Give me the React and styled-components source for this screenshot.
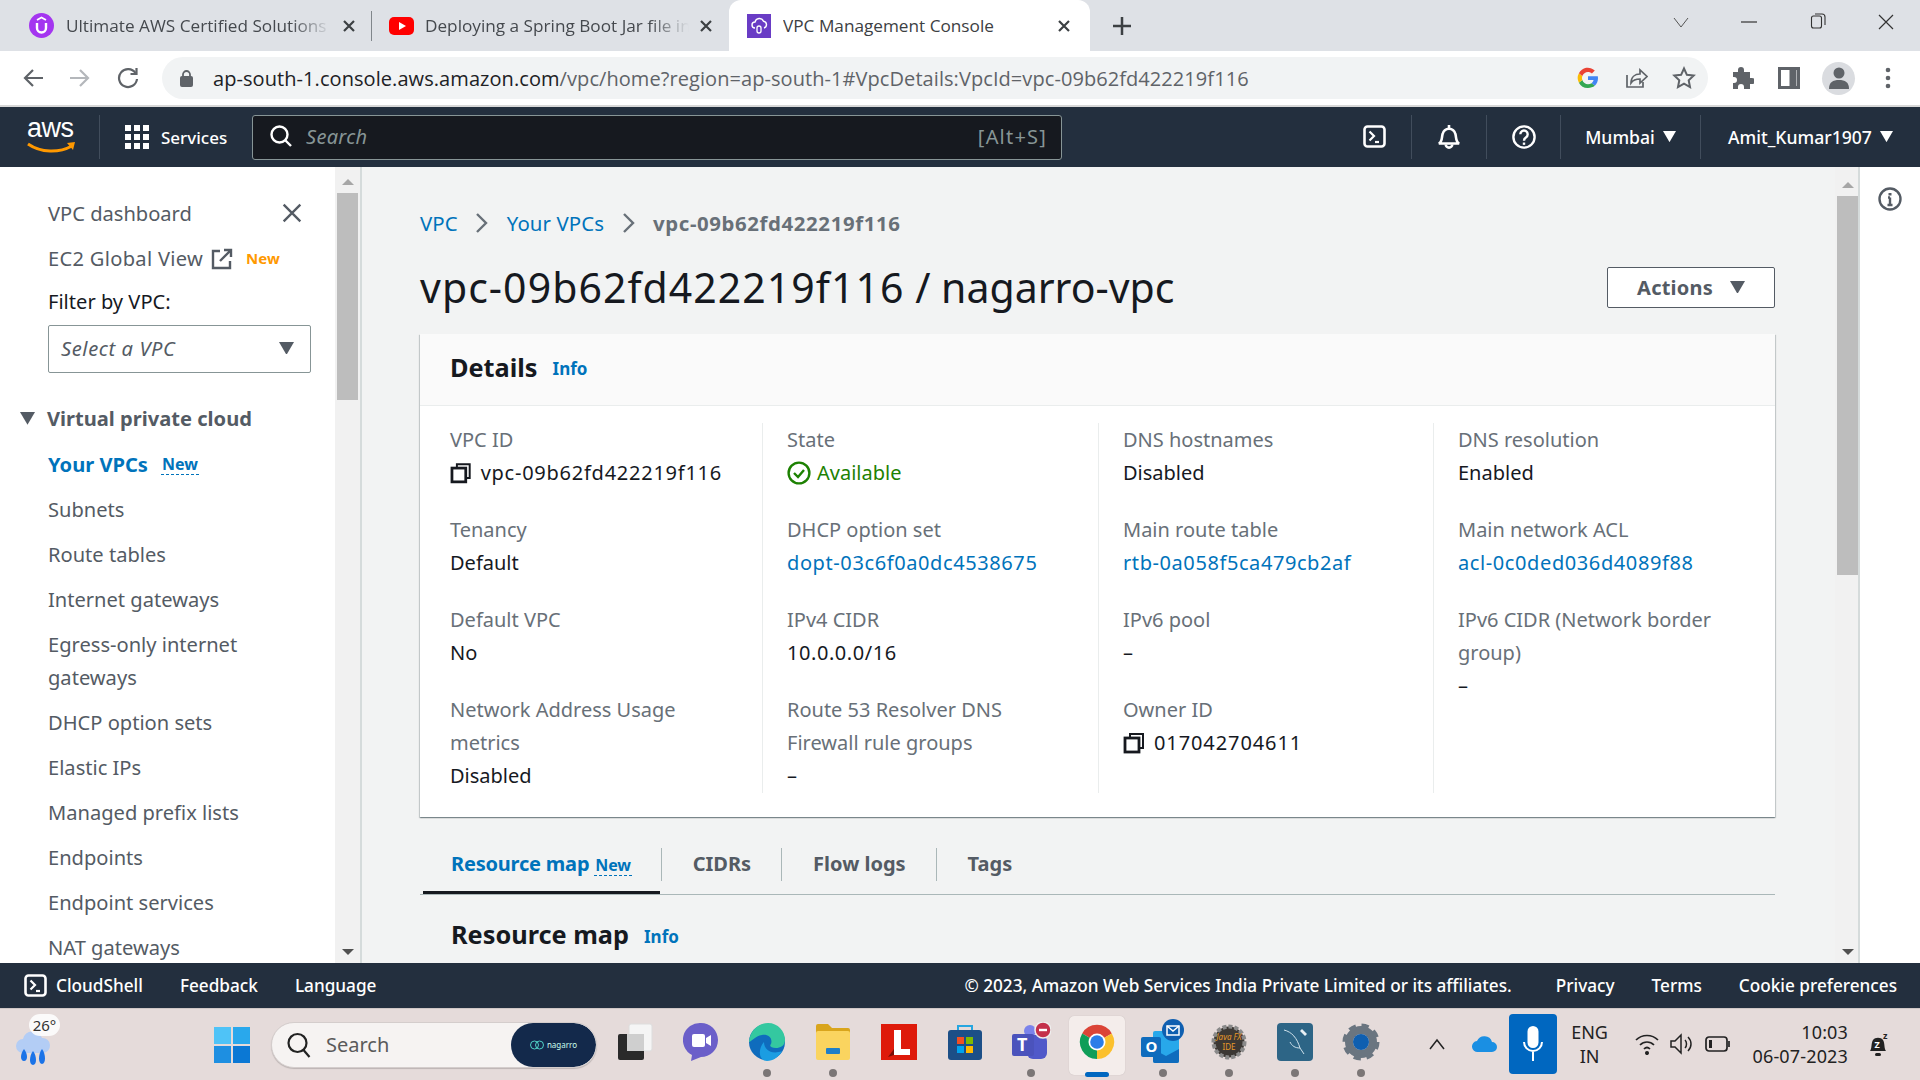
import React from 'react';
import styled, { createGlobalStyle } from 'styled-components';

const GlobalStyle = createGlobalStyle`
  html, body { margin: 0; padding: 0; background: #fff; }
  body { font-family: 'Noto Sans', Arial, sans-serif; overflow: hidden; }
  * { box-sizing: border-box; }
`;

const Page = styled.div`
  width: 1920px;
  height: 1080px;
  display: flex;
  flex-direction: column;
  overflow: hidden;
`;

/* browser chrome */
const TabStrip = styled.div`
  height: 51px;
  flex: none;
  display: flex;
  background: #dee1e6;
  color: #3c4043;
`;

const Tab = styled.div`
  width: ${p => p.$width}px;
  height: 51px;
  flex: none;
  display: flex;
  align-items: center;
  gap: ${p => p.$gap || 12}px;
  margin-left: ${p => (p.$active ? 4 : 0)}px;
  padding: 0 ${p => p.$right}px 0 ${p => p.$left}px;
  background: ${p => (p.$active ? '#fff' : 'transparent')};
  border-radius: ${p => (p.$active ? '12px 12px 0 0' : '0')};
`;

const TabDivider = styled.div`
  width: 1px;
  height: 30px;
  flex: none;
  align-self: center;
  background: #80868b;
`;

const TabTitle = styled.span`
  flex: 1;
  min-width: 0;
  overflow: hidden;
  white-space: nowrap;
  font-family: 'Open Sans', sans-serif;
  font-size: 17.2px;
  color: ${p => (p.$active ? '#3c4043' : '#45494e')};
  ${p => !p.$active && `
    -webkit-mask-image: linear-gradient(90deg, #000 85%, transparent 100%);
    mask-image: linear-gradient(90deg, #000 85%, transparent 100%);
  `}
`;

const NewTab = styled.div`
  width: 60px;
  margin-left: 2px;
  display: flex;
  align-items: center;
  justify-content: center;
`;

const WindowControls = styled.div`
  margin-left: auto;
  display: flex;
  align-items: flex-start;
  padding: 13px 26px 0 0;
  gap: 52.5px;
`;

const AddressRow = styled.div`
  height: 54px;
  flex: none;
  display: flex;
  align-items: center;
  background: #fff;
  padding: 0 0 0 20px;
`;

const NavButton = styled.div`
  width: 26px;
  margin-right: ${p => p.$gap}px;
  display: flex;
  align-items: center;
  justify-content: center;
`;

const Omnibox = styled.div`
  width: 1546px;
  height: 42px;
  margin-left: 21px;
  border-radius: 21px;
  background: #f1f3f4;
  display: flex;
  align-items: center;
  padding: 0 12px 0 18px;
`;

const Url = styled.div`
  margin-left: 20px;
  flex: 1;
  font-family: 'Open Sans', sans-serif;
  font-size: 20px;
  letter-spacing: 0.07px;
  white-space: nowrap;
  color: #5f6368;
  b { font-weight: 400; color: #202124; }
`;

const OmniIcons = styled.div`
  display: flex;
  align-items: center;
  gap: 24px;
`;

const ToolIcons = styled.div`
  display: flex;
  align-items: center;
  margin-left: 22px;
  gap: 24px;
`;

const Avatar = styled.div`
  width: 33px;
  height: 33px;
  border-radius: 50%;
  background: #dadce0;
  display: flex;
  align-items: center;
  justify-content: center;
  margin: 0 6px 0 -2px;
`;

const ChromeRule = styled.div`
  height: 2px;
  flex: none;
  background: #d8d8d8;
`;

/* aws top nav */
const TopNav = styled.div`
  height: 60px;
  flex: none;
  background: #232f3e;
  color: #fff;
  display: flex;
  align-items: center;
  font-size: 17px;
  font-weight: 500;
`;

const LogoBox = styled.div`
  width: 100px;
  height: 44px;
  padding-left: 27px;
  border-right: 1px solid #414d5c;
  display: flex;
  flex-direction: column;
`;

const LogoText = styled.span`
  font-family: 'Liberation Sans', sans-serif;
  font-size: 27px;
  line-height: 26px;
  height: 26px;
  letter-spacing: -0.5px;
`;

const ServicesBtn = styled.div`
  width: 152px;
  display: flex;
  align-items: center;
  gap: 12px;
  padding-left: 25px;
`;

const SearchBox = styled.div`
  width: 810px;
  height: 45px;
  background: #16191f;
  border: 1px solid #879596;
  border-radius: 3px;
  display: flex;
  align-items: center;
  padding: 0 14px 2px 17px;
  gap: 14px;
`;

const SearchHint = styled.span`
  flex: 1;
  color: #879596;
  font-style: italic;
  font-size: 20px;
  letter-spacing: 0.3px;
  font-weight: 400;
`;

const Shortcut = styled.span`
  color: #879596;
  font-size: 20px;
  letter-spacing: 1.2px;
  font-weight: 400;
`;

const NavRight = styled.div`
  margin-left: auto;
  display: flex;
  align-items: center;
  height: 44px;
`;

const NavCell = styled.div`
  height: 44px;
  display: flex;
  align-items: center;
  justify-content: center;
  gap: 8px;
  width: ${p => p.$width}px;
  font-size: 17.6px;
  padding-bottom: 1px;
  border-left: ${p => (p.$sep ? '1px solid #414d5c' : 'none')};
`;

/* body */
const Body = styled.div`
  flex: 1;
  min-height: 0;
  display: flex;
  background: #f2f3f3;
`;

const Sidebar = styled.nav`
  width: 335px;
  flex: none;
  background: #fff;
  overflow: hidden;
  color: #545b64;
  font-size: 20.1px;
  padding: 28px 24px 0 48px;
`;

const NavLine = styled.div`
  display: flex;
  align-items: center;
  height: ${p => p.$height || 45}px;
  line-height: 33px;
  color: ${p => (p.$active ? '#0073bb' : '#545b64')};
  font-weight: ${p => (p.$active ? 700 : 400)};
`;

const SideClose = styled.span`
  display: flex;
  margin-left: auto;
  margin-right: 9px;
`;

const GlobalLabel = styled.span`
  letter-spacing: 0.3px;
  margin-right: 8px;
`;

const WrapItem = styled.div`
  line-height: 33px;
  padding: 6px 0;
  width: 220px;
`;

const NewTag = styled.span`
  font-size: ${p => (p.$dashed ? 16 : 15)}px;
  font-weight: 700;
  margin-left: ${p => p.$gap}px;
  color: ${p => p.$color};
  ${p => p.$dashed && `
    border-bottom: 1px dashed ${p.$color};
    line-height: 20px;
    padding: 0 1px;
  `}
`;

const TabNew = styled(NewTag)`
  margin-top: 7px;
`;

const FilterLabel = styled.div`
  color: #16191f;
  height: 31px;
  line-height: 31px;
  margin-bottom: 8px;
`;

const SelectBox = styled.div`
  width: 263px;
  height: 48px;
  border: 1px solid #879596;
  border-radius: 2px;
  display: flex;
  align-items: center;
  justify-content: space-between;
  padding: 0 16px 2px 12px;
  font-style: italic;
  letter-spacing: 0.6px;
  margin-bottom: 22px;
`;

const GroupTitle = styled.div`
  display: flex;
  align-items: center;
  gap: 12px;
  margin-left: -28px;
  height: 47px;
  font-weight: 700;
`;

const Track = styled.div`
  width: ${p => p.$width}px;
  flex: none;
  background: #f1f1f1;
  border-right: 2px solid #d5dbdb;
  display: flex;
  flex-direction: column;
  align-items: center;
  padding: ${p => p.$top}px 0 8px ${p => p.$left || 0}px;
`;

const Thumb = styled.div`
  width: 21px;
  height: ${p => p.$height}px;
  margin-top: 8px;
  background: #bdbdbd;
`;

const Arrow = styled.div`
  width: 0;
  height: 0;
  border-left: 6px solid transparent;
  border-right: 6px solid transparent;
  ${p => (p.$down ? 'border-top: 6px solid #505050;' : 'border-bottom: 6px solid #a6a6a6;')}
  ${p => p.$down && 'margin-top: auto;'}
`;

const Main = styled.main`
  flex: 1;
  min-width: 0;
  overflow: hidden;
  padding: 0 60px 0 58px;
`;

const Breadcrumbs = styled.div`
  display: flex;
  align-items: center;
  height: 84px;
  padding-top: 27px;
  font-size: 20.4px;
  gap: 17.5px;
`;

const Crumb = styled.span`
  color: ${p => (p.$current ? '#687078' : '#0073bb')};
  font-weight: ${p => (p.$current ? 700 : 400)};
  letter-spacing: ${p => (p.$current ? '0.6px' : '0.1px')};
`;

const TitleRow = styled.div`
  display: flex;
  align-items: center;
  justify-content: space-between;
  height: 72px;
  margin-bottom: 11px;
`;

const Title = styled.h1`
  margin: 0;
  font-size: 41px;
  font-weight: 400;
  color: #16191f;
`;

const TitleId = styled.span`
  letter-spacing: 1.05px;
`;

const ActionsBtn = styled.div`
  width: 168px;
  height: 41px;
  background: #fff;
  border: 1px solid #545b64;
  border-radius: 2px;
  display: flex;
  align-items: center;
  justify-content: center;
  gap: 17px;
  color: #545b64;
  font-size: 20px;
  letter-spacing: 0.2px;
  font-weight: 700;
`;

const Card = styled.section`
  background: #fff;
  height: 483px;
  box-shadow: 0 1px 1px 0 rgba(0, 28, 36, 0.3), 1px 1px 1px 0 rgba(0, 28, 36, 0.15), -1px 1px 1px 0 rgba(0, 28, 36, 0.15);
`;

const CardHeader = styled.header`
  height: 72px;
  background: #fafafa;
  border-bottom: 1px solid #eaeded;
  display: flex;
  align-items: center;
  padding: 0 0 6px 30px;
  gap: 15px;
`;

const SectionTitle = styled.h2`
  margin: 0;
  font-size: 25.3px;
  font-weight: 700;
  color: #16191f;
`;

const InfoLink = styled.span`
  font-size: 17px;
  font-weight: 700;
  color: #0073bb;
  margin-top: 4px;
`;

const FieldGrid = styled.div`
  display: grid;
  grid-template-columns: 342px 336px 335px 1fr;
  padding: 17px 0 0;
`;

const FieldCol = styled.div`
  height: 370px;
  padding: 0 40px 0 ${p => (p.$first ? 30 : 24)}px;
  border-left: ${p => (p.$first ? 'none' : '1px solid #eaeded')};
  display: flex;
  flex-direction: column;
  gap: 24px;
`;

const Field = styled.div`
  font-size: 20px;
  line-height: 33px;
`;

const Label = styled.div`
  color: #687078;
`;

const Value = styled.div`
  display: flex;
  align-items: center;
  gap: 6px;
  white-space: nowrap;
  letter-spacing: ${p => p.$track || 0}px;
  color: ${p => p.$color || '#16191f'};
`;

const CopyGlyph = styled.svg`
  margin-right: 3px;
`;

const TabBar = styled.div`
  margin-top: 31px;
  height: 47px;
  display: flex;
  border-bottom: 1px solid #aab7b8;
  align-items: flex-start;
`;

const DetailTab = styled.div`
  height: ${p => (p.$active ? '46px' : '33px')};
  display: flex;
  align-items: center;
  padding: 0 30px 2px 31px;
  font-size: 20px;
  line-height: 31px;
  font-weight: 700;
  color: ${p => (p.$active ? '#0073bb' : '#545b64')};
  ${p => (p.$active
    ? `align-items: flex-start; margin: 0 1px 0 3px; padding: 0 28px 0 28px; border-bottom: 3px solid #16191f; letter-spacing: -0.2px;`
    : `border-left: 1px solid #aab7b8;`)}
`;

const SubHeading = styled.div`
  display: flex;
  align-items: center;
  gap: 15px;
  padding: 22px 0 0 31px;
`;

const SidePanel = styled.aside`
  width: 60px;
  flex: none;
  background: #fff;
  display: flex;
  justify-content: center;
  padding-top: 20px;
`;

/* aws footer */
const Footer = styled.footer`
  height: 45px;
  flex: none;
  background: #232f3e;
  color: #fff;
  display: flex;
  align-items: center;
  padding: 0 23px 0 24px;
  font-size: 17.2px;
  font-weight: 500;
`;

const FooterGroup = styled.div`
  display: flex;
  align-items: center;
  gap: 37px;
  margin-left: ${p => (p.$right ? 'auto' : 0)};
`;

const Copyright = styled.span`
  margin-right: 7px;
`;

const ShellBtn = styled.div`
  display: flex;
  align-items: center;
  gap: 9px;
`;

/* windows taskbar */
const Taskbar = styled.div`
  height: 72px;
  flex: none;
  background: #e5dbda;
  border-top: 1px solid #cfc7c6;
  display: flex;
  align-items: center;
  position: relative;
  padding-left: 15px;
`;

const Weather = styled.div`
  width: 50px;
  height: 50px;
  position: relative;
  margin-top: 4px;
`;

const TempBadge = styled.span`
  position: absolute;
  left: 14px;
  top: -8px;
  width: 31px;
  height: 22px;
  border-radius: 11px;
  background: rgba(255, 255, 255, 0.85);
  color: #333;
  font-size: 15px;
  line-height: 22px;
  text-align: center;
`;

const WinLogo = styled.div`
  margin-left: 149px;
  width: 36px;
  display: flex;
`;

const TaskSearch = styled.div`
  width: 326px;
  height: 46px;
  margin-left: 21px;
  border-radius: 23px;
  background: #f6f3f2;
  border: 1px solid #d4cdcc;
  box-shadow: 0 1px 1px rgba(0, 0, 0, 0.18);
  display: flex;
  align-items: center;
  padding-left: 15px;
  gap: 15px;
  font-size: 20px;
  color: #5a5a5a;
  overflow: hidden;
`;

const SearchLabel = styled.span`
  flex: 1;
`;

const Nagarro = styled.div`
  width: 85px;
  height: 44px;
  border-radius: 22px;
  background: #13294b;
  color: #cfe;
  font-size: 8px;
  display: flex;
  align-items: center;
  justify-content: center;
  gap: 3px;
`;

const TaskItems = styled.div`
  display: flex;
  margin-left: 5px;
`;

const TaskItem = styled.div`
  width: 66px;
  height: 70px;
  position: relative;
  display: flex;
  align-items: center;
  justify-content: center;
  padding-bottom: 5px;
`;

const TaskGlyph = styled.span`
  position: relative;
  display: flex;
`;

const ActiveTile = styled.div`
  position: absolute;
  left: 5px;
  top: 6px;
  width: 56px;
  height: 59px;
  border-radius: 5px;
  background: #f4edeb;
  box-shadow: 0 0 1px rgba(0, 0, 0, 0.2);
`;

const RunDot = styled.span`
  position: absolute;
  left: 50%;
  bottom: 3px;
  transform: translateX(-50%);
  width: ${p => (p.$active ? 24 : 8)}px;
  height: ${p => (p.$active ? 5 : 8)}px;
  border-radius: 4px;
  background: ${p => (p.$active ? '#0067c0' : '#7b7676')};
`;

const Tray = styled.div`
  position: absolute;
  right: 31px;
  top: 0;
  height: 70px;
  display: flex;
  align-items: center;
  color: #222;
`;

const OneDrive = styled.span`
  display: flex;
  margin-left: 26px;
`;

const MicTile = styled.div`
  width: 48px;
  height: 60px;
  border-radius: 4px;
  background: #0067c0;
  display: flex;
  align-items: center;
  justify-content: center;
  margin: 0 7px 0 11px;
`;

const Lang = styled.div`
  width: 52px;
  text-align: center;
  font-size: 18px;
  line-height: 24px;
  margin-right: 19px;
`;

const TrayIcons = styled.div`
  display: flex;
  align-items: center;
  gap: 11px;
  margin-right: 22px;
`;

const Clock = styled.div`
  text-align: right;
  font-size: 18px;
  letter-spacing: 0.15px;
  line-height: 24px;
  margin-right: 19px;
`;

/* icons */
const Caret = ({ size = 14, color = '#545b64' }) => (
  <svg width={size} height={size * 0.86} viewBox="0 0 14 12"><path d="M0 0h14L7 12z" fill={color} /></svg>
);

const Chevron = () => (
  <svg width="14" height="22" viewBox="0 0 14 22" fill="none"><path d="M2 2l9 9-9 9" stroke="#687078" strokeWidth="2.4" /></svg>
);

const CloseX = ({ size = 12, color = '#3c4043', width = 2.2 }) => (
  <svg width={size} height={size} viewBox="0 0 12 12" fill="none"><path d="M1 1l10 10M11 1L1 11" stroke={color} strokeWidth={width} /></svg>
);

const Shell = () => (
  <svg width="23" height="23" viewBox="0 0 23 23" fill="none">
    <rect x="1.5" y="1.5" width="20" height="20" rx="3" stroke="#fff" strokeWidth="2.6" />
    <path d="M6.500 6.500l4.500 4.500-4.500 4.500" stroke="#fff" strokeWidth="2.2" />
    <path d="M12 17h4" stroke="#fff" strokeWidth="2.2" />
  </svg>
);

const Copy = () => (
  <CopyGlyph width="22" height="22" viewBox="0 0 22 22" fill="none" stroke="#16191f" strokeWidth="2.8">
    <rect x="2" y="6" width="14" height="14" />
    <path d="M7 5V2h13v14h-3" strokeWidth="2" />
  </CopyGlyph>
);

const Check = () => (
  <svg width="24" height="24" viewBox="0 0 24 24" fill="none" stroke="#1d8102" strokeWidth="2.4">
    <circle cx="12" cy="12" r="10.4" />
    <path d="M7 12l4 4 6-7" />
  </svg>
);

const Udemy = () => (
  <svg width="25" height="25" viewBox="0 0 25 25">
    <circle cx="12.5" cy="12.5" r="12.5" fill="#a435f0" />
    <path d="M8 10v5a4.5 4.5 0 0 0 9 0v-5" fill="none" stroke="#fff" strokeWidth="2.4" />
    <path d="M8 7l4.5-2.5L17 7" fill="none" stroke="#fff" strokeWidth="1.8" />
  </svg>
);

const YouTube = () => (
  <svg width="25" height="18" viewBox="0 0 25 18">
    <rect width="25" height="18" rx="5" fill="#f00" />
    <path d="M10 5l7 4-7 4z" fill="#fff" />
  </svg>
);

const VpcFav = () => (
  <svg width="24" height="24" viewBox="0 0 24 24">
    <rect width="24" height="24" fill="#693cc5" />
    <path d="M8 14a3 3 0 0 1 0-6 4.5 4.5 0 0 1 8.500-.8A3.500 3.500 0 0 1 17 14" fill="none" stroke="#fff" strokeWidth="1.4" />
    <rect x="10" y="12" width="4" height="7" rx="2" fill="none" stroke="#fff" strokeWidth="1.3" />
  </svg>
);

const GoogleG = () => (
  <svg width="24" height="24" viewBox="0 0 24 24">
    <path d="M22 12.200c0-.7-.1-1.400-.2-2H12v3.900h5.600a4.800 4.800 0 0 1-2.100 3.100l3.300 2.600c2-1.800 3.200-4.500 3.200-7.600z" fill="#4285f4" />
    <path d="M12 22c2.700 0 5-.9 6.800-2.200l-3.300-2.600c-.9.600-2.100 1-3.500 1-2.600 0-4.900-1.800-5.700-4.200l-3.400 2.700A10 10 0 0 0 12 22z" fill="#34a853" />
    <path d="M6.300 14a6 6 0 0 1 0-4L2.900 7.300a10 10 0 0 0 0 9.400z" fill="#fbbc05" />
    <path d="M12 5.900c1.500 0 2.800.5 3.900 1.500l2.900-2.900A10 10 0 0 0 2.900 7.300L6.300 10C7.100 7.700 9.400 5.900 12 5.900z" fill="#ea4335" />
  </svg>
);

const Grid9 = () => (
  <svg width="24" height="24" viewBox="0 0 24 24" fill="#fff">
    {[0, 9, 18].flatMap(y => [0, 9, 18].map(x => <rect key={`${x}-${y}`} x={x} y={y} width="6" height="6" />))}
  </svg>
);

const ChromeLogo = () => (
  <svg width="36" height="36" viewBox="0 0 36 36">
    <path d="M18 18L3.200 9.500A17 17 0 0 1 32.800 9.500z" fill="#db4437" />
    <path d="M18 18L32.800 9.500A17 17 0 0 1 18 35z" fill="#fbc02d" />
    <path d="M18 18L18 35A17 17 0 0 1 3.200 9.500z" fill="#0f9d58" />
    <circle cx="18" cy="18" r="8.500" fill="#fff" />
    <circle cx="18" cy="18" r="6.800" fill="#2b7de9" />
  </svg>
);

const taskIcons = [
  { key: 'view', dot: false, icon: (
    <svg width="36" height="38" viewBox="0 0 36 38">
      <rect x="12" y="1" width="23" height="27" rx="2" fill="#f5f5f5" stroke="#ddd" />
      <rect x="1" y="11" width="26" height="26" rx="2" fill="#2a2a2a" />
      <rect x="10" y="11" width="17" height="17" fill="#cfcfcf" />
    </svg>
  ) },
  { key: 'chat', dot: false, icon: (
    <svg width="36" height="40" viewBox="0 0 36 40">
      <path d="M18 1c9 0 17 7 17 17s-8 17-17 17l-10 4 1-6A17 17 0 0 1 18 1z" fill="#6b5fc9" />
      <rect x="9" y="12" width="13" height="13" rx="2" fill="#fff" />
      <path d="M23 16l5-3v11l-5-3z" fill="#fff" />
    </svg>
  ) },
  { key: 'edge', dot: true, icon: (
    <svg width="38" height="40" viewBox="0 0 38 40">
      <circle cx="19" cy="20" r="18" fill="#0f6cbd" />
      <path d="M1 20C2 7 12 1 20 1c10 0 17 8 17 17 0 6-5 8-9 8-5 0-7-2-5-4 2-6-3-10-9-9-7 1-11 7-13 7z" fill="#34c8a0" />
      <path d="M16 20c0 8 8 13 18 9-3 6-9 10-15 10-9 0-9-13-3-19z" fill="#1b9de2" />
    </svg>
  ) },
  { key: 'files', dot: true, icon: (
    <svg width="36" height="38" viewBox="0 0 36 38">
      <path d="M1 3a2 2 0 0 1 2-2h10l4 4h16a2 2 0 0 1 2 2v4H1z" fill="#d9a51c" />
      <rect x="1" y="8" width="34" height="29" rx="2" fill="#fad45f" />
      <rect x="11" y="25" width="14" height="6" rx="1" fill="#1f7fc8" />
    </svg>
  ) },
  { key: 'l', dot: false, icon: (
    <svg width="36" height="36" viewBox="0 0 36 36">
      <rect width="36" height="36" fill="#de1a0a" />
      <path d="M13 6h7v19h9v6H13z" fill="#fff" />
      <path d="M7 33l6-8v6z" fill="#7a0c05" />
    </svg>
  ) },
  { key: 'store', dot: false, icon: (
    <svg width="36" height="38" viewBox="0 0 36 38">
      <path d="M11 8V3h14v5" fill="none" stroke="#26a6e0" strokeWidth="2" />
      <rect x="1" y="7" width="34" height="30" rx="3" fill="#1c4f87" />
      <rect x="10" y="14" width="7" height="7" fill="#f25022" />
      <rect x="19" y="14" width="7" height="7" fill="#7fba00" />
      <rect x="10" y="23" width="7" height="7" fill="#00a4ef" />
      <rect x="19" y="23" width="7" height="7" fill="#ffb900" />
    </svg>
  ) },
  { key: 'teams', dot: true, icon: (
    <svg width="40" height="40" viewBox="0 0 40 40">
      <circle cx="19" cy="9" r="6" fill="#7b83eb" />
      <rect x="16" y="13" width="20" height="24" rx="6" fill="#5059c9" />
      <rect x="1" y="12" width="22" height="22" rx="2" fill="#4b53bc" />
      <text x="6" y="29" fontSize="18" fontWeight="700" fill="#fff" fontFamily="Noto Sans">T</text>
      <circle cx="32" cy="8" r="8" fill="#c4314b" stroke="#eee" strokeWidth="1.500" />
      <rect x="28" y="6.800" width="8" height="2.400" fill="#fff" />
    </svg>
  ) },
  { key: 'chrome', dot: true, active: true, icon: <ChromeLogo /> },
  { key: 'outlook', dot: true, icon: (
    <svg width="46" height="46" viewBox="0 0 46 46">
      <rect x="13" y="12" width="26" height="32" rx="2" fill="#28a8ea" />
      <path d="M13 30l13 7 13-7v12a2 2 0 0 1-2 2H15a2 2 0 0 1-2-2z" fill="#0f6cbd" />
      <rect x="1" y="18" width="20" height="20" rx="2" fill="#0f6cbd" />
      <text x="5.500" y="33" fontSize="15" fontWeight="700" fill="#fff" fontFamily="Noto Sans">O</text>
      <circle cx="33" cy="11" r="11" fill="#0f5fb0" />
      <rect x="27" y="7" width="12" height="9" fill="none" stroke="#fff" strokeWidth="1.500" />
      <path d="M27 7l6 5 6-5" fill="none" stroke="#fff" strokeWidth="1.500" />
    </svg>
  ) },
  { key: 'java', dot: true, icon: (
    <svg width="36" height="38" viewBox="0 0 36 38">
      <circle cx="18" cy="19" r="15.500" fill="#3c3834" stroke="#8a8a8a" strokeWidth="4" strokeDasharray="4 2" />
      <text x="18" y="17" textAnchor="middle" fontSize="8" fontStyle="italic" fill="#e89a2a" fontFamily="Noto Sans">Java FX</text>
      <text x="18" y="27" textAnchor="middle" fontSize="8" fill="#e89a2a" fontFamily="Noto Sans">IDE</text>
    </svg>
  ) },
  { key: 'mysql', dot: true, icon: (
    <svg width="36" height="38" viewBox="0 0 36 38">
      <rect width="36" height="38" rx="4" fill="#2d6586" />
      <path d="M7 7c8 2 13 8 16 18l4 6M23 25c-5 0-8-2-10-6" fill="none" stroke="#cfe2ec" strokeWidth="1" />
      <path d="M25 6l5 5-2 2-5-5z" fill="#e8f0f4" />
    </svg>
  ) },
  { key: 'settings', dot: true, icon: (
    <svg width="38" height="38" viewBox="0 0 38 38">
      <circle cx="19" cy="19" r="12" fill="none" stroke="#6a7580" strokeWidth="8" />
      <circle cx="19" cy="19" r="16" fill="none" stroke="#6a7580" strokeWidth="5" strokeDasharray="7 5.570" />
      <circle cx="19" cy="19" r="8" fill="#0f5fb0" />
    </svg>
  ) },
];

const columns = [
  [
    { label: 'VPC ID', value: 'vpc-09b62fd422219f116', copy: true, track: 0.75 },
    { label: 'Tenancy', value: 'Default' },
    { label: 'Default VPC', value: 'No' },
    { label: 'Network Address Usage metrics', value: 'Disabled' },
  ],
  [
    { label: 'State', value: 'Available', status: true },
    { label: 'DHCP option set', value: 'dopt-03c6f0a0dc4538675', link: true, track: 0.6 },
    { label: 'IPv4 CIDR', value: '10.0.0.0/16', track: 0.55 },
    { label: 'Route 53 Resolver DNS Firewall rule groups', value: '–' },
  ],
  [
    { label: 'DNS hostnames', value: 'Disabled' },
    { label: 'Main route table', value: 'rtb-0a058f5ca479cb2af', link: true, track: 0.58 },
    { label: 'IPv6 pool', value: '–' },
    { label: 'Owner ID', value: '017042704611', copy: true, track: 0.9 },
  ],
  [
    { label: 'DNS resolution', value: 'Enabled' },
    { label: 'Main network ACL', value: 'acl-0c0ded036d4089f88', link: true, track: 0.6 },
    { label: 'IPv6 CIDR (Network border group)', value: '–' },
  ],
];

const sideItems = ['Subnets', 'Route tables', 'Internet gateways', 'Egress-only internet gateways', 'DHCP option sets', 'Elastic IPs', 'Managed prefix lists', 'Endpoints', 'Endpoint services', 'NAT gateways'];

const fieldColor = f => (f.status ? '#1d8102' : f.link ? '#0073bb' : '#16191f');

export default function App() {
  return (
    <Page>
      <GlobalStyle />
      <TabStrip>
        <Tab $width={371} $left={29} $right={16}>
          <Udemy />
          <TabTitle>Ultimate AWS Certified Solutions Architect</TabTitle>
          <CloseX />
        </Tab>
        <TabDivider />
        <Tab $width={353} $left={17} $right={13} $gap={11}>
          <YouTube />
          <TabTitle>Deploying a Spring Boot Jar file in AWS</TabTitle>
          <CloseX />
        </Tab>
        <Tab $width={361} $active $left={18} $right={20}>
          <VpcFav />
          <TabTitle $active>VPC Management Console</TabTitle>
          <CloseX />
        </Tab>
        <NewTab>
          <svg width="18" height="18" viewBox="0 0 18 18"><path d="M9 0v18M0 9h18" stroke="#3c4043" strokeWidth="2.500" /></svg>
        </NewTab>
        <WindowControls>
          <svg width="16" height="18" viewBox="0 0 16 18" fill="none"><path d="M1 5l7 9 7-9" stroke="#555" strokeWidth="1" /></svg>
          <svg width="16" height="18" viewBox="0 0 16 18"><path d="M0 9h16" stroke="#333" strokeWidth="1.200" /></svg>
          <svg width="16" height="18" viewBox="0 0 16 18" fill="none" stroke="#333" strokeWidth="1.100"><rect x="1.500" y="3" width="10" height="12" rx="2" /><path d="M5 1h7a3 3 0 0 1 3 3v8" /></svg>
          <svg width="16" height="18" viewBox="0 0 16 18" fill="none"><path d="M1 2l14 14M15 2L1 16" stroke="#333" strokeWidth="1.200" /></svg>
        </WindowControls>
      </TabStrip>

      <AddressRow>
        <NavButton $gap={21}>
          <svg width="20" height="20" viewBox="0 0 20 20" fill="none" stroke="#5f6368" strokeWidth="2.200"><path d="M20 10H2M10 2l-8 8 8 8" /></svg>
        </NavButton>
        <NavButton $gap={22}>
          <svg width="20" height="20" viewBox="0 0 20 20" fill="none" stroke="#b4b7bb" strokeWidth="2.200"><path d="M0 10h18M10 2l8 8-8 8" /></svg>
        </NavButton>
        <NavButton $gap={0}>
          <svg width="22" height="22" viewBox="0 0 22 22" fill="none" stroke="#5f6368" strokeWidth="2.200"><path d="M18.500 6A9 9 0 1 0 20 12" /><path d="M19.500 1v6h-6" /></svg>
        </NavButton>
        <Omnibox>
          <svg width="13" height="17" viewBox="0 0 13 17"><rect y="6" width="13" height="11" rx="2" fill="#5f6368" /><path d="M3 7V4.500a3.500 3.500 0 0 1 7 0V7" fill="none" stroke="#5f6368" strokeWidth="1.800" /></svg>
          <Url><b>ap-south-1.console.aws.amazon.com</b>/vpc/home?region=ap-south-1#VpcDetails:VpcId=vpc-09b62fd422219f116</Url>
          <OmniIcons>
            <GoogleG />
            <svg width="24" height="24" viewBox="0 0 24 24" fill="none" stroke="#5f6368" strokeWidth="1.700"><path d="M3 9v12h16v-5" /><path d="M7 17c0-6 4-9 9-9V4l7 6.500-7 6.500v-4c-4 0-7 1-9 4z" /></svg>
            <svg width="24" height="24" viewBox="0 0 24 24" fill="none" stroke="#5f6368" strokeWidth="2"><path d="M12 2.500l2.900 6.300 6.800.8-5 4.700 1.300 6.800-6-3.400-6 3.400 1.300-6.800-5-4.700 6.800-.8z" /></svg>
          </OmniIcons>
        </Omnibox>
        <ToolIcons>
          <svg width="24" height="24" viewBox="0 0 24 24" fill="#5f6368"><path d="M3 6h5V4a3 3 0 0 1 6 0v2h6v6h2a3 3 0 0 1 0 6h-2v5h-6v-2a3 3 0 0 0-6 0v2H3v-6h1a3 3 0 0 0 0-6H3z" /></svg>
          <svg width="22" height="22" viewBox="0 0 22 22" fill="none" stroke="#5f6368" strokeWidth="3"><rect x="1.500" y="1.500" width="19" height="19" /><path d="M15 2v18" strokeWidth="7" /></svg>
          <Avatar>
            <svg width="20" height="22" viewBox="0 0 20 22" fill="#5f6368"><circle cx="10" cy="6" r="5.500" /><path d="M0 22c0-7 4-9 10-9s10 2 10 9z" /></svg>
          </Avatar>
          <svg width="6" height="22" viewBox="0 0 6 22" fill="#5f6368"><circle cx="3" cy="3" r="2.300" /><circle cx="3" cy="11" r="2.300" /><circle cx="3" cy="19" r="2.300" /></svg>
        </ToolIcons>
      </AddressRow>
      <ChromeRule />

      <TopNav>
        <LogoBox>
          <LogoText>aws</LogoText>
          <svg width="50" height="14" viewBox="0 0 50 14" fill="none">
            <path d="M1 3c13 9 31 9 44 2" stroke="#f90" strokeWidth="3" />
            <path d="M40 2l8-1-2 8z" fill="#f90" />
          </svg>
        </LogoBox>
        <ServicesBtn><Grid9 />Services</ServicesBtn>
        <SearchBox>
          <svg width="22" height="22" viewBox="0 0 22 22" fill="none" stroke="#fff" strokeWidth="2.400"><circle cx="9.500" cy="9.500" r="8" /><path d="M15 15l6 6" /></svg>
          <SearchHint>Search</SearchHint>
          <Shortcut>[Alt+S]</Shortcut>
        </SearchBox>
        <NavRight>
          <NavCell $width={74}><Shell /></NavCell>
          <NavCell $width={75} $sep>
            <svg width="24" height="24" viewBox="0 0 26 26" fill="none" stroke="#fff" strokeWidth="2.800"><path d="M2 20c4-2 3-7 4-10 1-4 4-6 7-6s6 2 7 6c1 3 0 8 4 10z" /><path d="M13 0v4M9.500 21a3.500 3.500 0 0 0 7 0" /></svg>
          </NavCell>
          <NavCell $width={74} $sep>
            <svg width="24" height="24" viewBox="0 0 26 26" fill="none" stroke="#fff" strokeWidth="2.600"><circle cx="13" cy="13" r="11.500" /><path d="M9 10a4 4 0 1 1 6 3.500c-1.500 1-2 1.700-2 3.500" /><path d="M13 19v2.500" /></svg>
          </NavCell>
          <NavCell $width={140} $sep>Mumbai <Caret size={13} color="#fff" /></NavCell>
          <NavCell $width={220} $sep>Amit_Kumar1907 <Caret size={13} color="#fff" /></NavCell>
        </NavRight>
      </TopNav>

      <Body>
        <Sidebar>
          <NavLine $height={36}>
            VPC dashboard
            <SideClose><CloseX size={20} color="#545b64" width={1.4} /></SideClose>
          </NavLine>
          <NavLine $height={55}>
            <GlobalLabel>EC2 Global View</GlobalLabel>
            <svg width="22" height="22" viewBox="0 0 22 22" fill="none" stroke="#545b64" strokeWidth="2.400"><path d="M9 3H2v17h17v-7" /><path d="M9 13L20 2M13 2h7v7" /></svg>
            <NewTag $gap={13} $color="#ff9900">New</NewTag>
          </NavLine>
          <FilterLabel>Filter by VPC:</FilterLabel>
          <SelectBox>Select a VPC <Caret size={15} /></SelectBox>
          <GroupTitle><Caret size={15} />Virtual private cloud</GroupTitle>
          <NavLine $active>Your VPCs<NewTag $gap={13} $color="#0073bb" $dashed>New</NewTag></NavLine>
          {sideItems.map(item => (item.length > 25
            ? <WrapItem key={item}>{item}</WrapItem>
            : <NavLine key={item}>{item}</NavLine>))}
        </Sidebar>
        <Track $width={27} $top={12}>
          <Arrow />
          <Thumb $height={207} />
          <Arrow $down />
        </Track>

        <Main>
          <Breadcrumbs>
            <Crumb>VPC</Crumb><Chevron />
            <Crumb>Your VPCs</Crumb><Chevron />
            <Crumb $current>vpc-09b62fd422219f116</Crumb>
          </Breadcrumbs>
          <TitleRow>
            <Title><TitleId>vpc-09b62fd422219f116</TitleId> / nagarro-vpc</Title>
            <ActionsBtn>Actions <Caret size={15} /></ActionsBtn>
          </TitleRow>
          <Card>
            <CardHeader>
              <SectionTitle>Details</SectionTitle>
              <InfoLink>Info</InfoLink>
            </CardHeader>
            <FieldGrid>
              {columns.map((col, i) => (
                <FieldCol key={i} $first={i === 0}>
                  {col.map(f => (
                    <Field key={f.label}>
                      <Label>{f.label}</Label>
                      <Value $color={fieldColor(f)} $track={f.track}>
                        {f.copy && <Copy />}
                        {f.status && <Check />}
                        {f.value}
                      </Value>
                    </Field>
                  ))}
                </FieldCol>
              ))}
            </FieldGrid>
          </Card>
          <TabBar>
            <DetailTab $active>Resource map<TabNew $gap={5} $color="#0073bb" $dashed>New</TabNew></DetailTab>
            <DetailTab>CIDRs</DetailTab>
            <DetailTab>Flow logs</DetailTab>
            <DetailTab>Tags</DetailTab>
          </TabBar>
          <SubHeading>
            <SectionTitle>Resource map</SectionTitle>
            <InfoLink>Info</InfoLink>
          </SubHeading>
        </Main>

        <Track $width={25} $top={15} $left={2}>
          <Arrow />
          <Thumb $height={379} />
          <Arrow $down />
        </Track>
        <SidePanel>
          <svg width="24" height="24" viewBox="0 0 24 24" fill="none" stroke="#545b64" strokeWidth="2.400"><circle cx="12" cy="12" r="10.500" /><path d="M12 10.500V18M9.500 18h5M10 10.500h2" /><path d="M12 6v2.500" strokeWidth="3" /></svg>
        </SidePanel>
      </Body>

      <Footer>
        <FooterGroup>
          <ShellBtn><Shell />CloudShell</ShellBtn>
          <span>Feedback</span>
          <span>Language</span>
        </FooterGroup>
        <FooterGroup $right>
          <Copyright>© 2023, Amazon Web Services India Private Limited or its affiliates.</Copyright>
          <span>Privacy</span>
          <span>Terms</span>
          <span>Cookie preferences</span>
        </FooterGroup>
      </Footer>

      <Taskbar>
        <Weather>
          <svg width="36" height="46" viewBox="0 0 36 46">
            <path d="M8 31a7 7 0 0 1 0-14 10 10 0 0 1 19-1 7.500 7.500 0 0 1 1 15z" fill="#b3cdf5" />
            <path d="M9 27c4 5 4 12 0 12s-4-7 0-12zM18 29c4 5 4 14 0 14s-4-9 0-14zM27 27c4 5 4 15 0 15s-4-10 0-15z" fill="#1a73e8" />
          </svg>
          <TempBadge>26°</TempBadge>
        </Weather>
        <WinLogo>
          <svg width="36" height="36" viewBox="0 0 36 36">
            <rect width="17" height="17" fill="#4fc3f7" />
            <rect x="19" width="17" height="17" fill="#29a8ec" />
            <rect y="19" width="17" height="17" fill="#1e8fe1" />
            <rect x="19" y="19" width="17" height="17" fill="#0b78d4" />
          </svg>
        </WinLogo>
        <TaskSearch>
          <svg width="24" height="26" viewBox="0 0 24 26" fill="none" stroke="#222" strokeWidth="2.200"><circle cx="10.500" cy="11" r="9" /><path d="M16.500 18l6 7" /></svg>
          <SearchLabel>Search</SearchLabel>
          <Nagarro>
            <svg width="14" height="12" viewBox="0 0 14 12" fill="none" stroke="#4fd1c5"><circle cx="4.500" cy="6" r="4" /><circle cx="9.500" cy="6" r="4" /></svg>
            nagarro
          </Nagarro>
        </TaskSearch>
        <TaskItems>
          {taskIcons.map(t => (
            <TaskItem key={t.key}>
              {t.active && <ActiveTile />}
              <TaskGlyph>{t.icon}</TaskGlyph>
              {t.dot && <RunDot $active={t.active} />}
            </TaskItem>
          ))}
        </TaskItems>
        <Tray>
          <svg width="18" height="12" viewBox="0 0 18 12" fill="none" stroke="#222" strokeWidth="1.500"><path d="M2 11l7-9 7 9" /></svg>
          <OneDrive>
            <svg width="26" height="18" viewBox="0 0 26 18"><path d="M6 17a5.500 5.500 0 0 1-1-11 8 8 0 0 1 15 1 5 5 0 0 1 0 10z" fill="#1a8fe3" /></svg>
          </OneDrive>
          <MicTile>
            <svg width="22" height="36" viewBox="0 0 22 36" fill="none" stroke="#fff" strokeWidth="2"><rect x="6.500" y="1" width="9" height="20" rx="4.500" fill="#fff" /><path d="M2 16a9 9 0 0 0 18 0M11 25v10" /></svg>
          </MicTile>
          <Lang>ENG<br />IN</Lang>
          <TrayIcons>
            <svg width="24" height="22" viewBox="0 0 24 22" fill="none" stroke="#222" strokeWidth="1.700"><path d="M1 7c6-6 16-6 22 0M5 12c4-4 10-4 14 0M9 16c2-2 4-2 6 0" /><circle cx="12" cy="20" r="1.200" fill="#222" /></svg>
            <svg width="24" height="22" viewBox="0 0 24 22" fill="none" stroke="#222" strokeWidth="1.500"><path d="M1 8h4l6-6v18l-6-6H1zM15 7c2 2 2 6 0 8M18 4c4 4 4 10 0 14" /></svg>
            <svg width="26" height="16" viewBox="0 0 26 16" fill="none" stroke="#222" strokeWidth="1.700"><rect x="1" y="1" width="21" height="14" rx="3" /><rect x="4" y="4" width="3" height="8" fill="#222" stroke="none" /><path d="M24 5v6" /></svg>
          </TrayIcons>
          <Clock>10:03<br />06-07-2023</Clock>
          <svg width="22" height="28" viewBox="0 0 22 28"><path d="M3 21c2-2 1-8 3-11s8-3 10 0 1 9 3 11z" fill="#222" /><rect x="8" y="23" width="6" height="3" rx="1.500" fill="#222" /><text x="7.500" y="18" fontSize="9" fontWeight="700" fill="#fff" fontFamily="Noto Sans">Z</text><text x="16" y="9" fontSize="9" fontWeight="700" fill="#222" fontFamily="Noto Sans">z</text></svg>
        </Tray>
      </Taskbar>
    </Page>
  );
}
